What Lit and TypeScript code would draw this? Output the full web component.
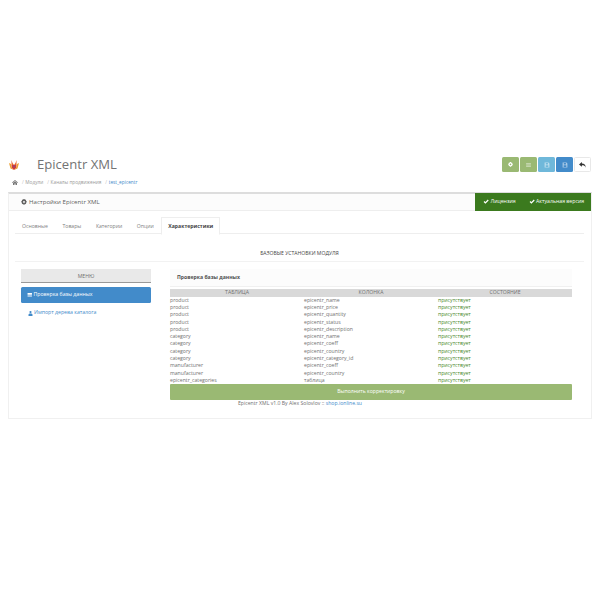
import { LitElement, html, css, svg } from 'lit';
import { customElement } from 'lit/decorators.js';

const rows = [
  ['product', 'epicentr_name'],
  ['product', 'epicentr_price'],
  ['product', 'epicentr_quantity'],
  ['product', 'epicentr_status'],
  ['product', 'epicentr_description'],
  ['category', 'epicentr_name'],
  ['category', 'epicentr_coeff'],
  ['category', 'epicentr_country'],
  ['category', 'epicentr_category_id'],
  ['manufacturer', 'epicentr_coeff'],
  ['manufacturer', 'epicentr_country'],
  ['epicentr_categories', 'таблица'],
];

const check = svg`<path d="M1 5l1.500-1.500L4 5l4-4 1.500 1.500L4 8z" fill="currentColor"/>`;
const gear = svg`<path fill-rule="evenodd" d="M4 0h2l.3 1.300 1-.5 1.400 1.400-.6 1L9.400 3.500V6L8.100 6.300l.6 1-1.400 1.400-1-.6L6 9.400H4l-.3-1.300-1 .6L1.300 7.300l.6-1L.6 6V3.500l1.300-.3-.6-1L2.700.8l1 .5zM5 3.200a1.600 1.600 0 1 0 0 3.200 1.600 1.600 0 0 0 0-3.200z" fill="currentColor"/>`;
const save = svg`<path fill-rule="evenodd" d="M1 1h6.500L9 2.500V9H1zM3 1.500V4h3.500V1.500zM2.800 5.500V8.500h4.400V5.500z" fill="currentColor"/>`;
const list = svg`<path d="M1 2h8v1.500H1zM1 4.300h8v1.500H1zM1 6.600h8v1.500H1z" fill="currentColor"/>`;

@customElement('app-root')
export class AppRoot extends LitElement {
  static styles = css`
    :host {
      display: block;
      width: 600px;
      height: 600px;
      background: #fff;
      font-family: 'Open Sans', 'Liberation Sans', sans-serif;
      font-size: 5.150px;
      line-height: 7.300px;
      color: #707070;
      box-sizing: border-box;
      padding-top: 155px;
    }
    svg {
      display: block;
    }

    /* page header */
    .header {
      display: flex;
      justify-content: space-between;
      height: 37px;
      padding: 0 9px;
    }
    .logo-row {
      display: flex;
      align-items: center;
      gap: 18px;
      height: 20px;
    }
    .title {
      font-size: 13.100px;
      line-height: 20px;
      margin-bottom: 1.500px;
      color: #737373;
    }
    .crumbs {
      display: flex;
      align-items: center;
      gap: 1.700px;
      margin-top: 3.500px;
      padding-left: 3px;
      font-size: 4.750px;
      color: #999;
    }
    .crumbs .sep {
      color: #bbb;
      margin-left: 2.200px;
    }
    .crumbs .cur {
      color: #428bca;
    }
    .buttons {
      display: flex;
      gap: 1px;
      margin-top: 2px;
    }
    .btn {
      width: 17px;
      height: 15px;
      border-radius: 1.500px;
      display: flex;
      align-items: center;
      justify-content: center;
      color: #fff;
      box-sizing: border-box;
    }
    .btn.green { background: #9ab973; }
    .btn.sky { background: #6fb8da; }
    .btn.blue { background: #428bca; }
    .btn.plain { background: #fff; border: 1px solid #e8e8e8; color: #333; }
    .btn .faded { opacity: 0.55; }

    /* main panel */
    .panel {
      margin: 0 8px;
      height: 227px;
      border: 1px solid #f0f0f0;
      border-top: 2px solid #ddd;
      box-sizing: border-box;
    }
    .panel-head {
      position: relative;
      display: flex;
      align-items: center;
      height: 16px;
      padding-left: 12px;
      gap: 2px;
      background: #fcfcfc;
      border-bottom: 1px solid #eee;
      font-size: 6.100px;
      color: #606060;
    }
    .badge {
      position: absolute;
      right: 0;
      top: -1px;
      height: 18px;
      width: 116px;
      box-sizing: border-box;
      background: #3b7a1e;
      color: #fff;
      display: flex;
      align-items: center;
      gap: 13px;
      padding-left: 8px;
      font-size: 5.200px;
    }
    .badge span {
      display: flex;
      align-items: center;
      gap: 1.500px;
    }
    .tabs {
      display: flex;
      gap: 0.600px;
      margin: 6px 7px 0 6px;
      height: 16px;
      border-bottom: 1px solid #eee;
      font-size: 5.150px;
      color: #808080;
    }
    .tab {
      padding: 0 7px;
      line-height: 18px;
    }
    .tab.active {
      background: #fff;
      border: 1px solid #eee;
      border-bottom: 1px solid #fff;
      height: 16px;
      line-height: 17px;
      font-weight: 700;
      color: #444;
      padding: 0 6px;
    }
    .section {
      margin: 0 7px 0 6px;
      height: 27px;
      line-height: 39px;
      text-align: center;
      border-bottom: 1px solid #f2f2f2;
      color: #444;
      font-size: 5.100px;
    }
    .columns {
      display: flex;
      margin-top: 7px;
      padding: 0 19px 0 12px;
      gap: 19px;
    }
    .side {
      width: 130px;
      flex: none;
    }
    .menu-head {
      height: 14px;
      line-height: 14px;
      background: #e9e9e9;
      border-bottom: 1px solid #999;
      box-sizing: border-box;
      text-align: center;
      color: #707070;
    }
    .menu-item {
      display: flex;
      align-items: center;
      gap: 1px;
      margin-top: 4px;
      height: 16px;
      padding-left: 6px;
      background: #428bca;
      border-radius: 1.500px;
      color: #fff;
      font-size: 5.200px;
    }
    .menu-link {
      display: flex;
      align-items: center;
      gap: 1.500px;
      margin-top: 6px;
      padding-left: 6.500px;
      height: 8px;
      color: #428bca;
      font-size: 5.200px;
    }
    .main {
      flex: 1;
      min-width: 0;
    }
    .main-head {
      height: 18px;
      line-height: 17px;
      padding-left: 7px;
      background: #fcfcfc;
      border-bottom: 1px solid #f0f0f0;
      box-sizing: border-box;
      font-weight: 700;
      color: #505050;
    }
    .grid {
      display: grid;
      grid-template-columns: repeat(3, 1fr);
      margin-top: 2px;
    }
    .grid .th {
      background: #d9d9d9;
      line-height: 7.700px;
      text-align: center;
      color: #707070;
    }
    .ok {
      color: #4a8a2c;
    }
    .run {
      height: 16px;
      line-height: 15px;
      background: #9ab973;
      border-radius: 1px;
      color: #fff;
      text-align: center;
    }
    .foot {
      text-align: center;
      line-height: 7px;
      color: #707070;
    }
    .foot span {
      color: #428bca;
    }
  `;

  render() {
    return html`
      <div class="header">
        <div>
          <div class="logo-row">
            <svg width="10" height="10" viewBox="0 0 10 10">
              <path d="M0 3l2 1 1 4 2 2-3.500-1.500z" fill="#eda02f"/>
              <path d="M10 3L8 4 7 8 5 10l3.500-1.500z" fill="#eda02f"/>
              <path d="M2.500 0L3.500 3 5 5 2.500 5z" fill="#e8632c"/>
              <path d="M7.500 0L6.500 3 5 5 7.500 5z" fill="#e8632c"/>
              <path d="M2.500 5h5L7 8 5 10 3 8z" fill="#d33a35"/>
              <path d="M4 5.500h2L5 8.500z" fill="#7a4a92"/>
            </svg>
            <div class="title">Epicentr XML</div>
          </div>
          <div class="crumbs">
            <svg width="6" height="5" viewBox="0 0 12 10"><path d="M6 0l6 5-1 1-5-4-5 4-1-1zM2 6l4-3 4 3v4H7V7H5v3H2z" fill="#777"/></svg>
            <span class="sep">/</span><span>Модули</span>
            <span class="sep">/</span><span>Каналы продвижения</span>
            <span class="sep">/</span><span class="cur">test_epicentr</span>
          </div>
        </div>
        <div class="buttons">
          <div class="btn green"><svg width="5" height="5" viewBox="0 0 10 10">${gear}</svg></div>
          <div class="btn green"><svg class="faded" width="7" height="6" viewBox="0 0 10 10">${list}</svg></div>
          <div class="btn sky"><svg class="faded" width="6" height="6" viewBox="0 0 10 10">${save}</svg></div>
          <div class="btn blue"><svg class="faded" width="6" height="6" viewBox="0 0 10 10">${save}</svg></div>
          <div class="btn plain">
            <svg width="7" height="6" viewBox="0 0 12 10"><path d="M5 0v2.500c4 0 6.500 2 6.500 7-1-3-3-4-6.500-4V8L0 4z" fill="currentColor"/></svg>
          </div>
        </div>
      </div>

      <div class="panel">
        <div class="panel-head">
          <svg width="6" height="6" viewBox="0 0 10 10">${gear}</svg>
          Настройки Epicentr XML
          <div class="badge">
            <span><svg width="6" height="6" viewBox="0 0 10 10">${check}</svg>Лицензия</span>
            <span><svg width="6" height="6" viewBox="0 0 10 10">${check}</svg>Актуальная версия</span>
          </div>
        </div>

        <div class="tabs">
          <div class="tab">Основные</div>
          <div class="tab">Товары</div>
          <div class="tab">Категории</div>
          <div class="tab">Опции</div>
          <div class="tab active">Характеристики</div>
        </div>

        <div class="section">БАЗОВЫЕ УСТАНОВКИ МОДУЛЯ</div>

        <div class="columns">
          <div class="side">
            <div class="menu-head">МЕНЮ</div>
            <div class="menu-item">
              <svg width="5.500" height="5.500" viewBox="0 0 10 10">${list}</svg>Проверка базы данных
            </div>
            <div class="menu-link">
              <svg width="5" height="5" viewBox="0 0 10 10"><path d="M5 0a2.200 2.200 0 1 1 0 4.400A2.200 2.200 0 0 1 5 0zM1 10V7.500C1 6 2.500 5 5 5s4 1 4 2.500V10z" fill="currentColor"/></svg>Импорт дерева каталога
            </div>
          </div>
          <div class="main">
            <div class="main-head">Проверка базы данных</div>
            <div class="grid">
              <div class="th">ТАБЛИЦА</div>
              <div class="th">КОЛОНКА</div>
              <div class="th">СОСТОЯНИЕ</div>
              ${rows.map(
                ([table, column]) => html`
                  <div>${table}</div>
                  <div>${column}</div>
                  <div class="ok">присутствует</div>
                `
              )}
            </div>
            <div class="run">Выполнить корректировку</div>
          </div>
        </div>
        <div class="foot">Epicentr XML v1.0 By Alex Solovlov :: <span>shop.ionline.su</span></div>
      </div>
    `;
  }
}
